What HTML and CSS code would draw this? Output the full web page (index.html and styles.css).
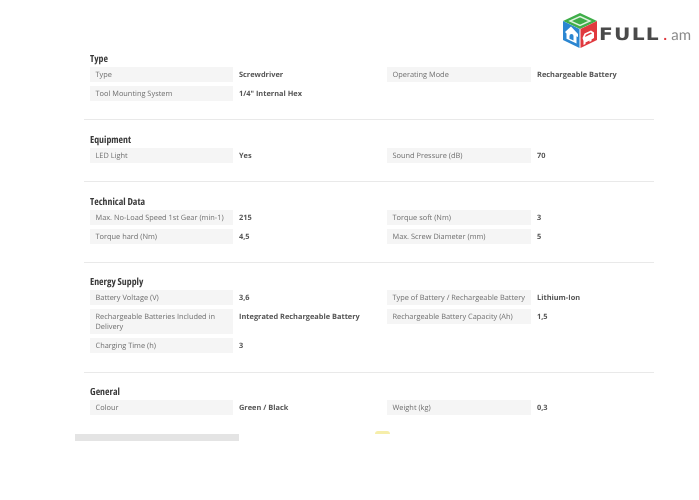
FILE: index.html
```html
<!DOCTYPE html>
<html lang="en">
<head>
<meta charset="utf-8">
<title>Specifications</title>
<link rel="stylesheet" href="styles.css">
</head>
<body>
<header class="top">
  <div class="logo">
    <svg class="cube" width="34" height="35" viewBox="0 0 34 35">
      <path d="M17 0 34 8 17 16 0 8Z" fill="#3fae49"/>
      <path d="M17 3.5 27 8 17 12.5 7 8Z" fill="none" stroke="#dff2df" stroke-width="1.4"/>
      <path d="M0 8 16.500 16V35L0 27Z" fill="#2b86d1"/>
      <path d="M34 8 17.500 16V35L34 27Z" fill="#e0393e"/>
      <path d="M2 19 8 13.500 15 21V24L13.500 23.300V30.500L3.500 25.800V20.500Z" fill="#fff"/>
      <path d="M8.500 21a2 2 0 0 1 2 2V27.500L6.500 25.700V23a2 2 0 0 1 2-2Z" fill="#2b86d1"/>
      <path d="M19.500 25 21.500 20.500 28 17.500 31 19.500V25L28.500 26.500V28L26.500 29V27.500L22.500 29.500V31L20.500 32V28Z" fill="#fff"/>
      <path d="M22.800 21.800 27.700 19.500 29 20.500 22 24Z" fill="#e0393e"/>
    </svg>
    <span class="brand">FULL</span><span class="dot">.</span><span class="tld">am</span>
  </div>
</header>
<main class="specs">
  <section class="group first">
    <h2>Type</h2>
    <div class="grid">
      <div class="label">Type</div><div class="value">Screwdriver</div>
      <div class="label">Operating Mode</div><div class="value">Rechargeable Battery</div>
      <div class="label">Tool Mounting System</div><div class="value">1/4" Internal Hex</div>
    </div>
  </section>
  <section class="group">
    <h2>Equipment</h2>
    <div class="grid">
      <div class="label">LED Light</div><div class="value">Yes</div>
      <div class="label">Sound Pressure (dB)</div><div class="value">70</div>
    </div>
  </section>
  <section class="group">
    <h2>Technical Data</h2>
    <div class="grid">
      <div class="label">Max. No-Load Speed 1st Gear (min-1)</div><div class="value">215</div>
      <div class="label">Torque soft (Nm)</div><div class="value">3</div>
      <div class="label">Torque hard (Nm)</div><div class="value">4,5</div>
      <div class="label">Max. Screw Diameter (mm)</div><div class="value">5</div>
    </div>
  </section>
  <section class="group energy">
    <h2>Energy Supply</h2>
    <div class="grid">
      <div class="label">Battery Voltage (V)</div><div class="value">3,6</div>
      <div class="label">Type of Battery / Rechargeable Battery</div><div class="value">Lithium-Ion</div>
      <div class="label">Rechargeable Batteries Included in Delivery</div><div class="value">Integrated Rechargeable Battery</div>
      <div class="label">Rechargeable Battery Capacity (Ah)</div><div class="value">1,5</div>
      <div class="label">Charging Time (h)</div><div class="value">3</div>
    </div>
  </section>
  <section class="group last">
    <h2>General</h2>
    <div class="grid">
      <div class="label">Colour</div><div class="value">Green / Black</div>
      <div class="label">Weight (kg)</div><div class="value">0,3</div>
    </div>
  </section>
</main>
<footer class="foot">
  <div class="bar"></div>
  <div class="arc"></div>
</footer>
</body>
</html>
```
FILE: styles.css
```css
* { box-sizing: border-box; }
html, body { margin: 0; padding: 0; background: #fff; }
body {
  width: 699px;
  height: 500px;
  overflow: hidden;
  font-family: "Open Sans", "Liberation Sans", sans-serif;
  color: #666;
  text-rendering: geometricPrecision;
  filter: blur(0.3px);
}
.top {
  height: 48px;
  padding: 14px 8px 0 0;
  display: flex;
  justify-content: flex-end;
}
.logo {
  height: 34px;
  display: flex;
  align-items: flex-end;
}
.cube { flex: none; margin-right: 2px; }
.brand {
  display: inline-block;
  font: 700 17px/20px "DejaVu Sans", sans-serif;
  letter-spacing: 1px;
  color: #4a4a4a;
  margin: 0 10px 3px 0;
  transform: scaleX(1.19);
  transform-origin: left center;
}
.dot {
  font: 700 14px/20px "Liberation Sans", sans-serif;
  color: #e0393e;
  margin: 0 4px 3px 3px;
}
.tld {
  font: 400 15px/20px "Lato", sans-serif;
  color: #8a8a8a;
  margin-bottom: 3px;
}
.specs { width: 570px; margin-left: 84px; }
.group {
  padding: 14px 0 18px 6px;
  border-bottom: 1px solid #e9e9e9;
}
.group.first { padding-top: 5px; }
.group.energy { padding-top: 13px; padding-bottom: 19px; }
.group.last { border-bottom: 0; padding-top: 13px; padding-bottom: 0; }
h2 {
  margin: 0 0 2px;
  font: 700 9.800px/12px "Open Sans", sans-serif;
  font-stretch: condensed;
  color: #3a3a3a;
}
.grid {
  display: grid;
  grid-template-columns: 143px 142px 144px 1fr;
  column-gap: 6px;
  row-gap: 4px;
  font-size: 7.400px;
  line-height: 10px;
}
.label {
  align-self: start;
  background: #f5f5f5;
  padding: 2.500px 3px 2.500px 5.500px;
  color: #6f6f6f;
}
.value {
  padding: 2.500px 0;
  font-weight: 700;
  color: #555;
}
.foot {
  display: flex;
  margin-top: 19px;
  padding-left: 75px;
  align-items: flex-start;
}
.bar { width: 164px; height: 7px; background: #e4e4e4; }
.arc {
  width: 15px;
  height: 3px;
  margin: -3px 0 0 136px;
  border-radius: 8px 8px 0 0;
  background: #f6eeaa;
}
```
